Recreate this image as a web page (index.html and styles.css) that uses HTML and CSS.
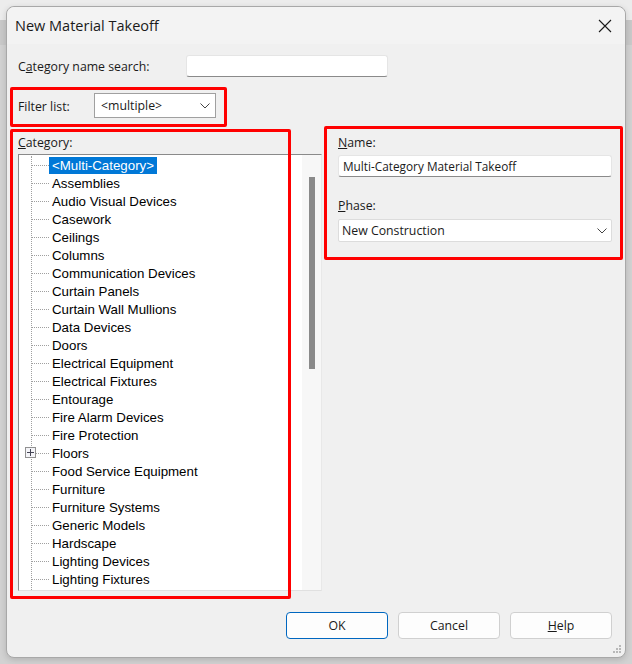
FILE: index.html
```html
<!DOCTYPE html>
<html>
<head>
<meta charset="utf-8">
<link rel="stylesheet" href="styles.css">
</head>
<body>
<div class="dialog">
  <div class="titlebar">
    <span class="title">New Material Takeoff</span>
    <svg class="close" width="14" height="14" viewBox="0 0 14 14"><path d="M1 1L13 13M13 1L1 13" stroke="#1a1a1a" stroke-width="1.1" fill="none"/></svg>
  </div>
  <div class="content">
    <div class="row search-row">
      <label class="lbl search-lbl">C<u>a</u>tegory name search:</label>
      <div class="textbox search-box"></div>
    </div>
    <div class="row filter-row">
      <label class="lbl filter-lbl">Filter list:</label>
      <div class="select filter-select"><span>&lt;multiple&gt;</span>
        <svg width="10" height="6" viewBox="0 0 10 6"><path d="M0.5 0.5L5 5L9.5 0.5" stroke="#444" stroke-width="1" fill="none"/></svg>
      </div>
    </div>
    <div class="main">
      <div class="left">
        <div class="lbl cat-lbl"><u>C</u>ategory:</div>
        <div class="tree">
          <ul class="items">
            <li><span class="branch"></span><span class="txt selected">&lt;Multi-Category&gt;</span></li>
            <li><span class="branch"></span><span class="txt">Assemblies</span></li>
            <li><span class="branch"></span><span class="txt">Audio Visual Devices</span></li>
            <li><span class="branch"></span><span class="txt">Casework</span></li>
            <li><span class="branch"></span><span class="txt">Ceilings</span></li>
            <li><span class="branch"></span><span class="txt">Columns</span></li>
            <li><span class="branch"></span><span class="txt">Communication Devices</span></li>
            <li><span class="branch"></span><span class="txt">Curtain Panels</span></li>
            <li><span class="branch"></span><span class="txt">Curtain Wall Mullions</span></li>
            <li><span class="branch"></span><span class="txt">Data Devices</span></li>
            <li><span class="branch"></span><span class="txt">Doors</span></li>
            <li><span class="branch"></span><span class="txt">Electrical Equipment</span></li>
            <li><span class="branch"></span><span class="txt">Electrical Fixtures</span></li>
            <li><span class="branch"></span><span class="txt">Entourage</span></li>
            <li><span class="branch"></span><span class="txt">Fire Alarm Devices</span></li>
            <li><span class="branch"></span><span class="txt">Fire Protection</span></li>
            <li><span class="expander"></span><span class="branch"></span><span class="txt">Floors</span></li>
            <li><span class="branch"></span><span class="txt">Food Service Equipment</span></li>
            <li><span class="branch"></span><span class="txt">Furniture</span></li>
            <li><span class="branch"></span><span class="txt">Furniture Systems</span></li>
            <li><span class="branch"></span><span class="txt">Generic Models</span></li>
            <li><span class="branch"></span><span class="txt">Hardscape</span></li>
            <li><span class="branch"></span><span class="txt">Lighting Devices</span></li>
            <li><span class="branch"></span><span class="txt">Lighting Fixtures</span></li>
          </ul>
          <div class="scrollbar"><div class="thumb"></div></div>
        </div>
      </div>
      <div class="right">
        <div class="lbl name-lbl"><u>N</u>ame:</div>
        <div class="textbox name-box">Multi-Category Material Takeoff</div>
        <div class="lbl phase-lbl"><u>P</u>hase:</div>
        <div class="select phase-select"><span>New Construction</span>
          <svg width="10" height="6" viewBox="0 0 10 6"><path d="M0.5 0.5L5 5L9.5 0.5" stroke="#444" stroke-width="1" fill="none"/></svg>
        </div>
      </div>
    </div>
  </div>
  <div class="footer">
    <button class="btn default">OK</button>
    <button class="btn">Cancel</button>
    <button class="btn"><u>H</u>elp</button>
  </div>
  <svg class="grip" width="10" height="10" viewBox="0 0 10 10">
    <rect x="7" y="1" width="2" height="2" fill="#b8b8b8"/>
    <rect x="4" y="4" width="2" height="2" fill="#b8b8b8"/>
    <rect x="7" y="4" width="2" height="2" fill="#b8b8b8"/>
    <rect x="1" y="7" width="2" height="2" fill="#b8b8b8"/>
    <rect x="4" y="7" width="2" height="2" fill="#b8b8b8"/>
    <rect x="7" y="7" width="2" height="2" fill="#b8b8b8"/>
  </svg>
  <div class="mark mark-filter"></div>
  <div class="mark mark-category"></div>
  <div class="mark mark-name"></div>
</div>
</body>
</html>
```
FILE: styles.css
```css
html, body {
  margin: 0;
  padding: 0;
}
body {
  width: 632px;
  height: 664px;
  overflow: hidden;
  background: linear-gradient(to bottom, #ececec 0px, #ececec 20px, #c9c9c9 20px, #c9c9c9 45px, #d2d2d2 45px, #d2d2d2 100%);
  font-family: "Open Sans", "Noto Sans", sans-serif;
  color: #1a1a1a;
}
.dialog {
  position: relative;
  margin: 6px 0 0 6px;
  width: 620px;
  height: 652px;
  box-sizing: border-box;
  border: 1px solid #a8a8a8;
  border-radius: 8px;
  background: #f0f0f0;
  display: flex;
  flex-direction: column;
  box-shadow: 0 2px 6px rgba(0,0,0,0.15);
}
.titlebar {
  height: 37px;
  display: flex;
  align-items: center;
  justify-content: space-between;
  padding: 0 13px 0 8px;
  background: #f3f3f3;
  border-radius: 8px 8px 0 0;
}
.title {
  font-size: 14.5px;
  color: #1a1a1a;
}
.close {
  display: block;
}
.content {
  padding-left: 11px;
}
.row {
  display: flex;
  align-items: center;
}
.lbl {
  font-size: 12.3px;
  line-height: 14px;
  color: #1a1a1a;
}
.search-row {
  margin-top: 11px;
  height: 22px;
}
.search-lbl {
  width: 168px;
  padding-top: 1px;
}
.textbox {
  background: #ffffff;
  border: 1px solid #e5e5e5;
  border-bottom: 1px solid #8a8a8a;
  border-radius: 3px;
  box-sizing: border-box;
  font-size: 12px;
}
.search-box {
  width: 202px;
  height: 22px;
}
.filter-row {
  margin-top: 16px;
  height: 25px;
}
.filter-lbl {
  width: 76px;
  padding-top: 2px;
}
.select {
  background: #ffffff;
  box-sizing: border-box;
  display: flex;
  align-items: center;
  justify-content: space-between;
  font-size: 12.3px;
}
.filter-select {
  width: 122px;
  height: 25px;
  border: 1px solid #a0a0a0;
  padding: 0 5px 0 6px;
}
.main {
  margin-top: 18px;
  display: flex;
}
.left {
  width: 304px;
}
.cat-lbl {
  margin-bottom: 4px;
}
.tree {
  height: 437px;
  box-sizing: border-box;
  border-top: 1px solid #8a8a8a;
  border-left: 1px solid #8a8a8a;
  border-bottom: 1px solid #e0e0e0;
  border-right: 1px solid #e8e8e8;
  background: #ffffff;
  display: flex;
  overflow: hidden;
}
.items {
  list-style: none;
  margin: 1px 0 0 12px;
  padding: 0;
  flex: 1;
  border-left: 1px dotted #a0a0a0;
  height: 440px;
  font-family: "Liberation Sans", Arial, sans-serif;
  font-size: 13.3px;
}
.items li {
  position: relative;
  height: 18px;
  display: flex;
  align-items: center;
  white-space: nowrap;
}
.branch {
  width: 17px;
  border-top: 1px dotted #a0a0a0;
  height: 0;
}
.txt {
  height: 17px;
  line-height: 17px;
  padding: 0 3px;
  color: #000;
}
.txt.selected {
  background: #0078d7;
  color: #ffffff;
}
.expander {
  position: absolute;
  left: -7px;
  top: 3px;
  width: 11px;
  height: 11px;
  box-sizing: border-box;
  border: 1px solid #919191;
  background: linear-gradient(#445 0 0) center / 7px 1px no-repeat, linear-gradient(#445 0 0) center / 1px 7px no-repeat, #f4f4f8;
}
.scrollbar {
  width: 19px;
  background: #f7f7f7;
  position: relative;
  flex: none;
}
.thumb {
  margin: 22px 0 0 7px;
  width: 6px;
  height: 192px;
  background: #8a8a8a;
}
.right {
  margin-left: 16px;
  width: 274px;
}
.name-lbl {
  margin-bottom: 5px;
}
.name-box {
  height: 22px;
  line-height: 20px;
  padding-left: 4px;
  font-size: 11.8px;
}
.phase-lbl {
  margin-top: 22px;
  margin-bottom: 6px;
}
.phase-select {
  height: 23px;
  border: 1px solid #dcdcdc;
  border-radius: 2px;
  padding: 0 4px 0 3px;
}
.footer {
  margin-top: auto;
  display: flex;
  justify-content: flex-end;
  gap: 10px;
  padding: 0 13px 18px 0;
}
.btn {
  width: 102px;
  height: 27px;
  box-sizing: border-box;
  border: 1px solid #d0d0d0;
  border-radius: 4px;
  background: #fdfdfd;
  font-family: "Open Sans", "Noto Sans", sans-serif;
  font-size: 12.3px;
  color: #1a1a1a;
  padding: 0;
}
.btn.default {
  border-color: #0067c0;
}
.grip {
  position: absolute;
  right: 3px;
  bottom: 3px;
}
.mark {
  position: absolute;
  border: 3px solid #ff0000;
  border-radius: 2px;
  box-sizing: border-box;
}
.mark-filter {
  left: 3px;
  top: 80px;
  width: 217px;
  height: 40px;
}
.mark-category {
  left: 3px;
  top: 122px;
  width: 281px;
  height: 470px;
}
.mark-name {
  left: 317px;
  top: 119px;
  width: 299px;
  height: 134px;
}
```
